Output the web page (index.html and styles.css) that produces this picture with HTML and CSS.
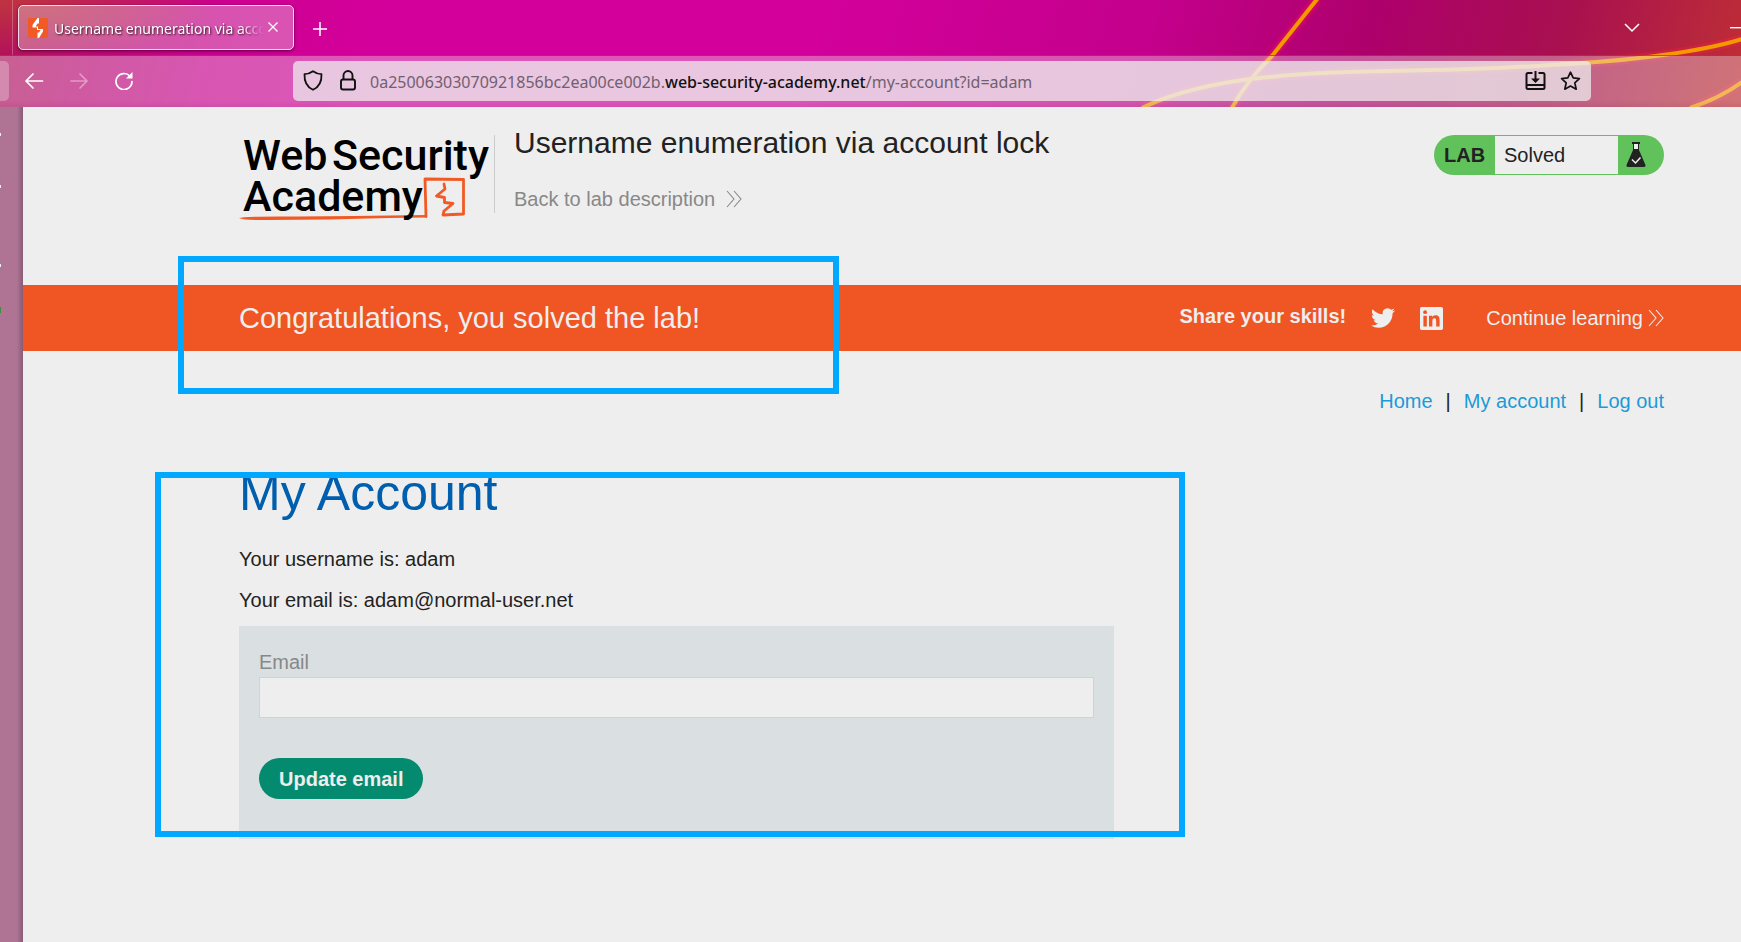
FILE: index.html
```html
<!DOCTYPE html>
<html lang="en">
<head>
<meta charset="utf-8">
<title>Username enumeration via account lock</title>
<link rel="stylesheet" href="styles.css">
</head>
<body>
<div class="window">
  <div class="chrome">
    <svg class="streaks" width="641" height="107" viewBox="0 0 641 107" fill="none" aria-hidden="true">
      <defs><filter id="glow" x="-10%" y="-20%" width="120%" height="140%"><feGaussianBlur stdDeviation="2"/></filter></defs>
      <g stroke="#ff2040" stroke-opacity=".55" stroke-width="7" filter="url(#glow)">
        <path d="M218-2 L172 56 Q145 83 132 108"/>
        <path d="M42 108 C140 60 300 77 450 65 Q580 58 642 39"/>
        <path d="M590 108 Q620 98 642 82"/>
      </g>
      <g stroke="#f39a00" stroke-width="4">
        <path d="M218-2 L172 56 Q145 83 132 108"/>
        <path d="M42 108 C140 60 300 77 450 65 Q580 58 642 39"/>
        <path d="M590 108 Q620 98 642 82"/>
      </g>
    </svg>
    <div class="tabstrip">
      <div class="pinned"></div>
      <div class="tab">
        <svg width="20" height="20" viewBox="0 0 20 20" aria-hidden="true"><path fill="#f15a24" d="M0 0h20v20H0z"/><path fill="#fff" d="M9.500 0H11v5.500H9.500L7.500 8.500H10V11h5v2.500L11 20H9.500v-5.500h1.500l1.500-2.500H9V9.500H4.500V7z"/></svg>
        <span class="tab-title">Username enumeration via account lock</span>
        <button class="icon-btn close" aria-label="Close tab"><svg width="12" height="12" viewBox="0 0 12 12" stroke="#fff" stroke-width="1.300"><path d="M1.500 1.500l9 9M10.500 1.500l-9 9"/></svg></button>
      </div>
      <button class="icon-btn plus" aria-label="New tab"><svg width="16" height="16" viewBox="0 0 16 16" stroke="#fff" stroke-width="1.500"><path d="M8 1v14M1 8h14"/></svg></button>
      <button class="icon-btn list" aria-label="List all tabs"><svg width="16" height="10" viewBox="0 0 16 10" fill="none" stroke="#fff" stroke-width="1.500"><path d="M1 1l7 7 7-7"/></svg></button>
      <button class="icon-btn minimize" aria-label="Minimize"><svg width="12" height="4" viewBox="0 0 12 4"><path d="M0 1h12v1.400H0z" fill="#fff"/></svg></button>
    </div>
    <div class="toolbar">
      <div class="edge"></div>
      <div class="nav-buttons">
        <button class="icon-btn" aria-label="Back"><svg width="20" height="18" viewBox="0 0 20 18" fill="none" stroke="#fff" stroke-width="1.700" stroke-linecap="round" stroke-linejoin="round"><path d="M18.500 9H2M9 2L2 9l7 7"/></svg></button>
        <button class="icon-btn" aria-label="Forward" disabled><svg width="20" height="18" viewBox="0 0 20 18" fill="none" stroke="#fff" stroke-opacity=".4" stroke-width="1.700" stroke-linecap="round" stroke-linejoin="round"><path d="M2 9h16M11 2l7 7-7 7"/></svg></button>
        <button class="icon-btn" aria-label="Reload"><svg width="20" height="18" viewBox="0 0 20 18" fill="none" stroke="#fff" stroke-width="1.700" stroke-linecap="round"><path d="M15.800 4A8 8 0 1 0 18 9.500"/><path d="M18.500 0v6.500H12z" fill="#fff" stroke="none"/></svg></button>
      </div>
      <div class="urlbar">
        <svg width="20" height="21" viewBox="0 0 20 21" fill="none" stroke="#111" stroke-width="1.800" stroke-linejoin="round" aria-hidden="true"><path d="M10 1.200Q14 4 18.500 4.200C18.800 11 16 17 10 19.800 4 17 1.200 11 1.500 4.200 6 4 10 1.200 10 1.200z"/></svg>
        <svg class="lock" width="18" height="21" viewBox="0 0 18 21" fill="none" stroke="#111" stroke-width="1.900" aria-hidden="true"><rect x="2" y="9.500" width="14" height="10" rx="2"/><path d="M4.500 9.500V5.500a4.500 4.500 0 0 1 9 0v4"/></svg>
        <div class="url">0a25006303070921856bc2ea00ce002b.<span class="domain">web-security-academy.net</span>/my-account?id=adam</div>
        <button class="icon-btn" aria-label="Install"><svg width="21" height="20" viewBox="0 0 21 20" fill="none" stroke="#111" stroke-width="2"><path d="M7.500 2H3a1.500 1.500 0 0 0-1.500 1.500v13A1.500 1.500 0 0 0 3 18h15a1.500 1.500 0 0 0 1.500-1.500v-13A1.500 1.500 0 0 0 18 2h-4.500M1.500 14h18M10.500 0v9"/><path d="M6 7.500h9L10.500 12z" fill="#111" stroke="none"/></svg></button>
        <button class="icon-btn" aria-label="Bookmark"><svg width="21" height="20" viewBox="0 0 21 20" fill="none" stroke="#111" stroke-width="1.700" stroke-linejoin="round"><path d="M10.500 1.200l2.700 5.700 6.200.7-4.600 4.200 1.400 6.400-5.700-3.200-5.700 3.200 1.400-6.400-4.600-4.200 6.200-.7z"/></svg></button>
      </div>
    </div>
  </div>

  <div class="view">
    <aside class="sidebar" aria-hidden="true">
      <i class="mark m1"></i><i class="mark m2"></i><i class="mark m3"></i><i class="mark m4"></i>
    </aside>
    <main class="page">
      <header class="lab-header">
        <svg class="logo" width="250" height="100" viewBox="15 15 250 100" role="img" aria-label="Web Security Academy">
          <g fill="none" stroke="#f15a24" stroke-width="2.800" stroke-linejoin="round" stroke-linecap="round">
            <path d="M202 102.500L201 65 239.500 65.500 239.500 100 219 101 220 97 229 89.500 220.500 88.500 220.500 83.500 212.500 82 221 75 220 70"/>
          </g>
          <path fill="#f15a24" d="M15 104q5-2 60-1.500l55-.5 35-.500 38-.5v2.500l-38 .5-60 1.500-60 .5Q20 106.500 15 104z"/>
          <g class="logo-text">
            <text x="19" y="56">Web</text>
            <text x="108" y="56">Security</text>
            <text x="19" y="97">Academy</text>
          </g>
        </svg>
        <div class="lab-title">
          <h2>Username enumeration via account lock</h2>
          <a class="back" href="#">Back to lab description
            <svg width="16" height="18" viewBox="0 0 16 18" fill="none" stroke="currentColor" stroke-width="1.100" aria-hidden="true"><path d="M1 1l7 8-7 8M8 1l7 8-7 8"/></svg></a>
        </div>
        <div class="status">
          <strong>LAB</strong>
          <span>Solved</span>
          <svg width="22" height="26" viewBox="0 0 22 26" aria-hidden="true"><path fill="#eee" d="M8 2h6v6H8z"/><path fill="#222" d="M7 0h8v2h-1v6l6.500 15q.5 2-1.500 2H3q-2 0-1.500-2L8 8V2H7zM9 2v5h4V2z" fill-rule="evenodd"/><path d="M7 17.500l3.500 3.500 5-5.500" fill="none" stroke="#eee" stroke-width="1.500"/></svg>
        </div>
      </header>

      <section class="banner">
        <h4>Congratulations, you solved the lab!</h4>
        <strong class="share">Share your skills!</strong>
        <a class="twitter" href="#" aria-label="Twitter"><svg width="24" height="24" viewBox="0 0 24 24" fill="#eee"><path d="M23.953 4.570a10 10 0 01-2.825.775 4.958 4.958 0 002.163-2.723c-.951.555-2.005.959-3.127 1.184a4.920 4.920 0 00-8.384 4.482C7.690 8.095 4.067 6.130 1.640 3.162a4.822 4.822 0 00-.666 2.475c0 1.710.870 3.213 2.188 4.096a4.904 4.904 0 01-2.228-.616v.060a4.923 4.923 0 003.946 4.827 4.996 4.996 0 01-2.212.085 4.936 4.936 0 004.604 3.417 9.867 9.867 0 01-6.102 2.105c-.390 0-.779-.023-1.170-.067a13.995 13.995 0 007.557 2.209c9.053 0 13.998-7.496 13.998-13.985 0-.210 0-.420-.015-.630A9.935 9.935 0 0024 4.590z"/></svg></a>
        <a class="linkedin" href="#" aria-label="LinkedIn"><svg width="23" height="23" viewBox="0 0 24 24" fill="#eee"><path d="M20.447 20.452h-3.554v-5.569c0-1.328-.027-3.037-1.852-3.037-1.853 0-2.136 1.445-2.136 2.939v5.667H9.351V9h3.414v1.561h.046c.477-.9 1.637-1.850 3.370-1.850 3.601 0 4.267 2.370 4.267 5.455v6.286zM5.337 7.433a2.062 2.062 0 110-4.125 2.062 2.062 0 010 4.125zm1.782 13.019H3.555V9h3.564v11.452zM22.225 0H1.771C.792 0 0 .774 0 1.729v20.542C0 23.227.792 24 1.771 24h20.451C23.200 24 24 23.227 24 22.271V1.729C24 .774 23.200 0 22.222 0z"/></svg></a>
        <a class="continue" href="#">Continue learning
          <svg width="16" height="18" viewBox="0 0 16 18" fill="none" stroke="currentColor" stroke-width="1.100" aria-hidden="true"><path d="M1 1l7 8-7 8M8 1l7 8-7 8"/></svg></a>
      </section>

      <nav class="links">
        <a href="#">Home</a><span>|</span><a href="#">My account</a><span>|</span><a href="#">Log out</a>
      </nav>

      <section class="account">
        <h1>My Account</h1>
        <p>Your username is: adam</p>
        <p>Your email is: adam@normal-user.net</p>
        <form>
          <label for="email">Email</label>
          <input id="email" type="email" name="email">
          <button type="button">Update email</button>
        </form>
      </section>
    </main>
  </div>
  <div class="highlight solved-mark"></div>
  <div class="highlight account-mark"></div>
</div>
</body>
</html>
```
FILE: styles.css
```css
* { box-sizing: border-box; }
body { margin: 0; font-family: "Liberation Sans", Arial, sans-serif; font-size: 20px; line-height: 24px; color: #222; }
h1, h2, h4, p { margin: 0; font-weight: normal; }
a { text-decoration: none; }
svg { display: block; flex: none; }

.window { position: relative; display: flex; flex-direction: column; min-height: 100vh; overflow: hidden; }

.chrome { position: relative; font-family: "Noto Sans", "Open Sans", sans-serif; background: radial-gradient(ellipse 220px 60px at 0 0, #c03440, transparent), linear-gradient(105deg, #b01058 0, #bc0874 90px, #cc0090 220px, #d4009c 380px, #d4009c 780px, #c4008c 1120px, #ae006c 1330px, #a8104f 1520px, #b8283c 1660px, #c6302c 1740px); overflow: hidden; }
.streaks { position: absolute; top: 0; right: 0; }
.tabstrip { position: relative; display: flex; align-items: center; height: 55px; }
.icon-btn { display: flex; align-items: center; padding: 0; border: 0; background: none; }
.pinned { width: 13px; height: 55px; margin-right: 5px; border-right: 1px solid rgba(255, 255, 255, .25); }
.tab { display: flex; align-items: center; width: 276px; height: 45px; padding: 0 14px 0 9px; border: 1px solid #f8dcee; border-radius: 5px; background: rgba(238, 238, 238, .35); box-shadow: 0 1px 3px rgba(40, 0, 30, .7); }
.tab-title { flex: 1; margin-left: 6px; padding-top: 2px; overflow: hidden; white-space: nowrap; font-size: 14px; color: #fff; text-shadow: 1px 1px 2px #301020; mask-image: linear-gradient(90deg, #000 88%, transparent); }
.close { margin: 0 0 1px 3px; }
.plus { margin: 2px 0 0 18px; }
.list { margin-left: auto; }
.minimize { margin: 0 0 0 90px; width: 11px; overflow: hidden; }

.toolbar { position: relative; display: flex; align-items: center; height: 52px; padding-bottom: 2px; border-top: 1px solid rgba(90, 40, 80, .6); background: linear-gradient(rgba(238, 238, 238, .36) 44px, rgba(215, 215, 215, .36)); }
.edge { width: 9px; height: 40px; border-radius: 0 5px 5px 0; background: rgba(238, 238, 238, .3); }
.nav-buttons { display: flex; gap: 25px; margin-left: 15px; width: 269px; }
.urlbar { display: flex; align-items: center; flex: 1; height: 40px; margin-right: 150px; padding: 0 10px; border-radius: 5px; background: rgba(238, 238, 238, .74); }
.lock { margin-left: 16px; }
.url { flex: 1; margin-left: 13px; padding-top: 3px; font-size: 16px; color: #706070; white-space: nowrap; }
.domain { color: #111; font-weight: 500; }
.urlbar .icon-btn + .icon-btn { margin-left: 14px; }

.view { display: flex; flex: 1; }
.sidebar { position: relative; width: 23px; background: linear-gradient(90deg, transparent 17px, rgba(60, 50, 60, .35)), #af7394; }
.mark { position: absolute; left: 0; width: 1px; height: 3px; background: #eee; }
.m1 { top: 26px; }
.m2 { top: 78px; }
.m3 { top: 157px; }
.m4 { top: 200px; height: 6px; background: #3c8c3c; }
.page { flex: 1; background: #eee; }

.lab-header { display: flex; align-items: flex-start; height: 178px; padding: 19px 77px 0 216px; }
.logo { margin-top: 3px; }
.logo-text { font-family: Roboto, sans-serif; font-size: 43px; font-weight: 500; fill: #000; }
.lab-title { position: relative; margin-left: 5px; padding-left: 20px; }
.lab-title::before { content: ""; position: absolute; left: 0; top: 9px; width: 1px; height: 78px; background: #ccc; }
.lab-title h2 { font-size: 30px; line-height: 34px; }
.back { display: flex; align-items: center; gap: 11px; margin-top: 27px; color: #888; }
.status { display: flex; align-items: center; height: 40px; margin: 9px 0 0 auto; border-radius: 20px; background: #61c15b; overflow: hidden; }
.status strong { width: 61px; padding-left: 10px; }
.status span { width: 123px; height: 38px; padding-left: 9px; line-height: 38px; background: #eee; }
.status svg { margin: 0 17px 0 7px; }

.banner { display: flex; align-items: center; height: 66px; padding: 0 77px 0 216px; background: #f05524; color: #eee; }
.banner h4 { flex: 1; font-size: 29px; line-height: 34px; }
.share { padding-bottom: 4px; }
.twitter { margin-left: 25px; }
.linkedin { margin-left: 25px; }
.continue { display: flex; align-items: center; gap: 5px; margin-left: 43px; color: #eee; }

.links { display: flex; justify-content: flex-end; gap: 13px; padding: 38px 77px 0 0; }
.links a { color: #1c9ad6; }
.account { width: 875px; margin: 50px 0 0 216px; }
h1 { font-size: 50px; line-height: 60px; color: #005eae; margin-bottom: 24px; }
p + p { margin-top: 17px; }
form { display: flex; flex-direction: column; align-items: flex-start; margin-top: 14px; padding: 24px 20px 40px; background: #dadfe1; }
label { color: #888; }
form input { width: 100%; height: 41px; margin: 3px 0 40px; padding: 0 10px; border: 1px solid #d0d3d4; background: #eee; font: inherit; }
form button { height: 41px; padding: 0 20px; border: 0; border-radius: 21px; background: #048a6e; color: #eee; font: inherit; font-weight: bold; }

.highlight { position: absolute; border: 6px solid #00a8ff; pointer-events: none; }
.solved-mark { left: 178px; top: 256px; width: 661px; height: 138px; }
.account-mark { left: 155px; top: 472px; width: 1030px; height: 365px; }
```
